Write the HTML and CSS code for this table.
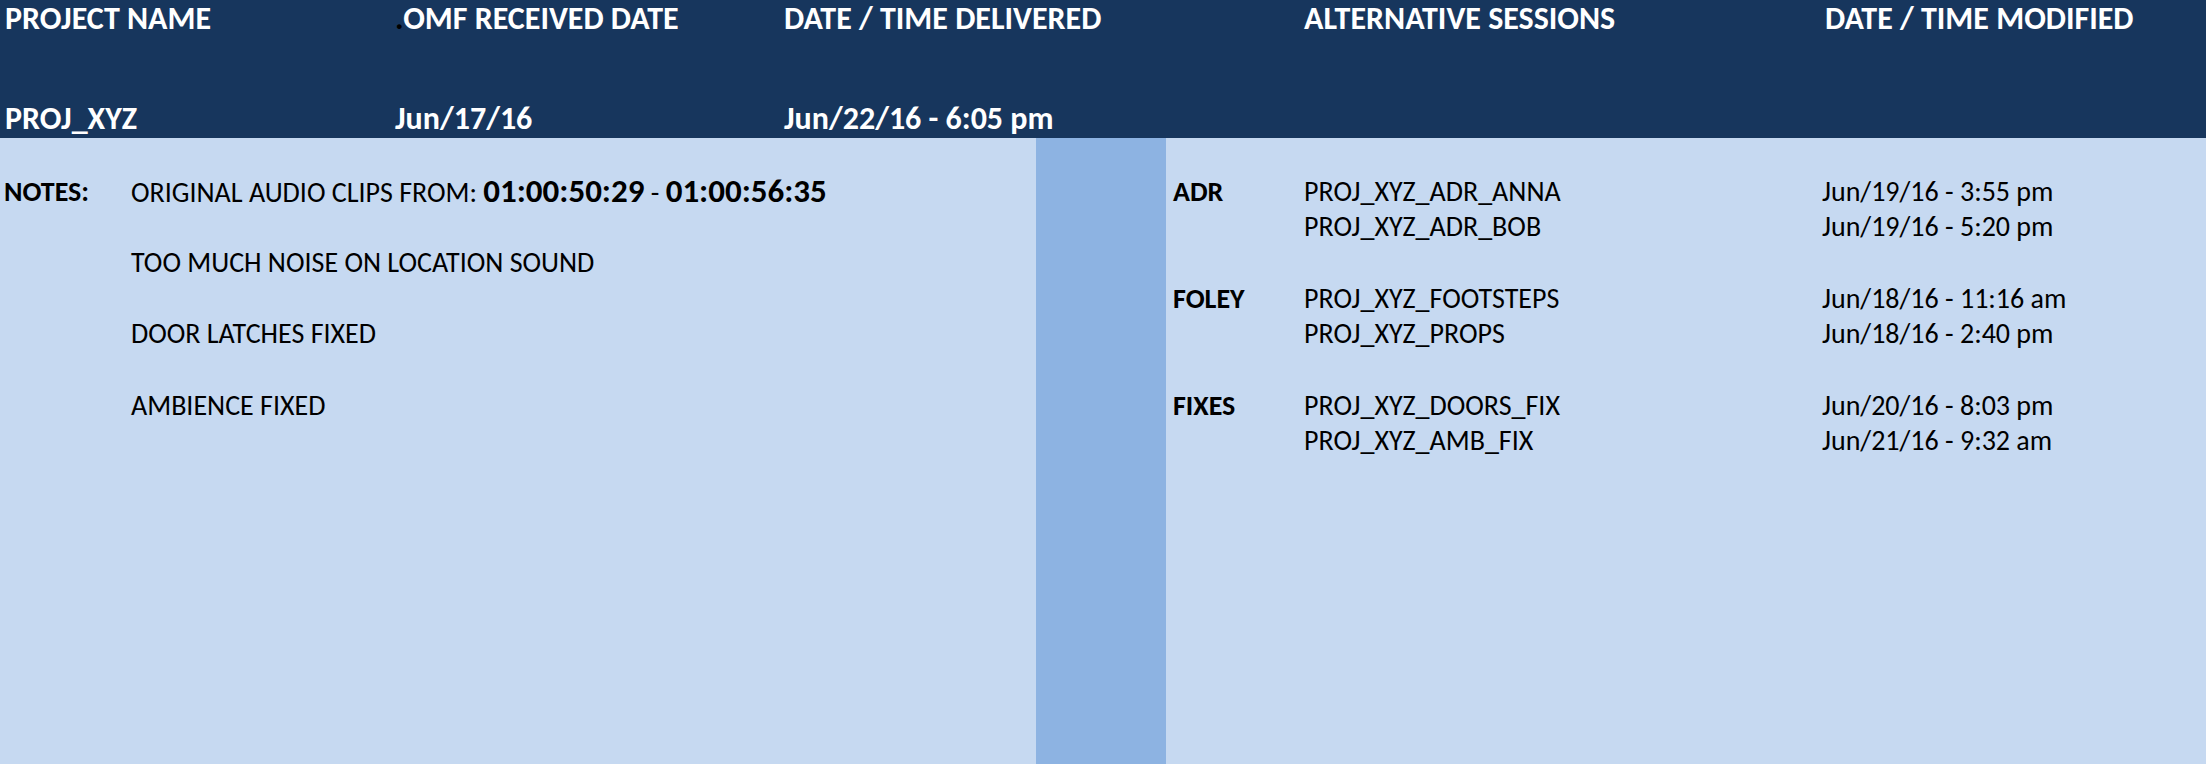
FILE: index.html
```html
<!DOCTYPE html>
<html lang="en">
<head>
<meta charset="utf-8">
<title>Project Delivery Sheet</title>
<link rel="stylesheet" href="styles.css">
</head>
<body>
<div class="sheet">
  <header class="head">
    <div class="head-row labels">
      <div class="cell c1">PROJECT NAME</div>
      <div class="cell c2"><span class="dot">.</span>OMF RECEIVED DATE</div>
      <div class="cell c3">DATE / TIME DELIVERED</div>
      <div class="cell c4"></div>
      <div class="cell c5"></div>
      <div class="cell c6">ALTERNATIVE SESSIONS</div>
      <div class="cell c7">DATE / TIME MODIFIED</div>
    </div>
    <div class="head-row values">
      <div class="cell c1">PROJ_XYZ</div>
      <div class="cell c2">Jun/17/16</div>
      <div class="cell c3">Jun/22/16 - 6:05 pm</div>
      <div class="cell c4"></div>
      <div class="cell c5"></div>
      <div class="cell c6"></div>
      <div class="cell c7"></div>
    </div>
  </header>
  <main class="body">
    <section class="notes">
      <div class="note-row">
        <div class="note-label">NOTES:</div>
        <div class="note-text">ORIGINAL AUDIO CLIPS FROM: <b class="tc">01:00:50:29</b> - <b class="tc">01:00:56:35</b></div>
      </div>
      <div class="note-row">
        <div class="note-label"></div>
        <div class="note-text">TOO MUCH NOISE ON LOCATION SOUND</div>
      </div>
      <div class="note-row">
        <div class="note-label"></div>
        <div class="note-text">DOOR LATCHES FIXED</div>
      </div>
      <div class="note-row">
        <div class="note-label"></div>
        <div class="note-text">AMBIENCE FIXED</div>
      </div>
    </section>
    <div class="divider"></div>
    <section class="sessions">
      <div class="group">
        <div class="s-type">ADR</div><div class="s-name">PROJ_XYZ_ADR_ANNA</div><div class="s-date">Jun/19/16 - 3:55 pm</div>
        <div class="s-type"></div><div class="s-name">PROJ_XYZ_ADR_BOB</div><div class="s-date">Jun/19/16 - 5:20 pm</div>
      </div>
      <div class="group">
        <div class="s-type">FOLEY</div><div class="s-name">PROJ_XYZ_FOOTSTEPS</div><div class="s-date">Jun/18/16 - 11:16 am</div>
        <div class="s-type"></div><div class="s-name">PROJ_XYZ_PROPS</div><div class="s-date">Jun/18/16 - 2:40 pm</div>
      </div>
      <div class="group">
        <div class="s-type">FIXES</div><div class="s-name">PROJ_XYZ_DOORS_FIX</div><div class="s-date">Jun/20/16 - 8:03 pm</div>
        <div class="s-type"></div><div class="s-name">PROJ_XYZ_AMB_FIX</div><div class="s-date">Jun/21/16 - 9:32 am</div>
      </div>
    </section>
  </main>
</div>
</body>
</html>
```

FILE: styles.css
```css
:root {
  --row: 35.67px;
  --dark: #17365d;
  --light: #c6d9f1;
  --mid: #8db3e2;
}

* { box-sizing: border-box; }

html, body {
  margin: 0;
  padding: 0;
  background: var(--light);
}

body {
  font-family: Carlito, Roboto, "Liberation Sans", sans-serif;
  color: #000;
  width: 2206px;
  height: 764px;
  overflow: hidden;
}

.sheet {
  display: flex;
  flex-direction: column;
  height: 764px;
}

/* ---------- header ---------- */
.head {
  background: var(--dark);
  color: #fff;
  height: 138px;
  display: flex;
  flex-direction: column;
  justify-content: space-between;
  font-weight: 700;
  font-size: 32px;
}

.head-row {
  display: grid;
  grid-template-columns: 394px 390px 252px 130px 138px 518px 1fr;
  white-space: nowrap;
}

.labels { height: 38px; line-height: 38px; }
.values { height: 39px; line-height: 39px; }

.cell.c1 { padding-left: 5px; }
.cell.c2 { padding-left: 1px; }
.cell.c7 { padding-left: 3px; }

.dot { color: #000; }

/* ---------- body ---------- */
.body {
  flex: 1;
  display: grid;
  grid-template-columns: 1036px 130px 1fr;
  font-size: 28px;
}

.notes {
  padding-top: var(--row);
  display: flex;
  flex-direction: column;
  gap: var(--row);
}

.note-row {
  display: grid;
  grid-template-columns: 131px 1fr;
  height: var(--row);
  line-height: var(--row);
  white-space: nowrap;
}

.note-label {
  padding-left: 4px;
  font-weight: 700;
}

.tc {
  font-weight: 700;
  font-size: 33px;
}

.divider {
  background: var(--mid);
}

.sessions {
  padding-top: var(--row);
  display: flex;
  flex-direction: column;
  gap: var(--row);
}

.group {
  display: grid;
  grid-template-columns: 138px 518px 1fr;
  grid-auto-rows: var(--row);
  line-height: var(--row);
  white-space: nowrap;
}

.s-type {
  padding-left: 7px;
  font-weight: 700;
}
```
